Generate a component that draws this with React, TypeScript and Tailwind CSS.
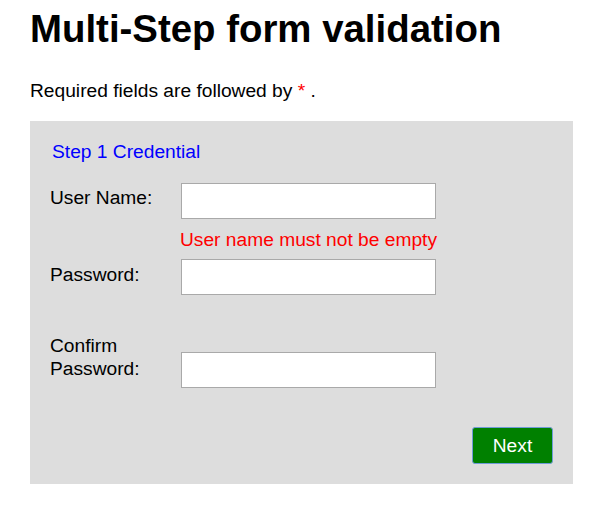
export default function App() {
  return (
    <div className="min-h-screen bg-white text-black font-['Liberation_Sans',Arial,sans-serif] text-[19.2px] leading-[22px] pl-[30px] pr-[28px]">
      <h1 className="pt-[7px] text-[38.4px] leading-[44px] font-bold">Multi-Step form validation</h1>
      <p className="mt-[29px]">
        Required fields are followed by <span className="text-[#ff0000]">*</span> .
      </p>

      <form className="mt-[19px] bg-[#dddddd] pt-[20px] pb-[20px] px-[20px] flex flex-col">
        <div className="ml-[2px] text-[#0000ff]">Step 1 Credential</div>

        <div className="mt-[20px] flex items-start">
          <label className="w-[131px] mt-[4px]">User Name:</label>
          <input type="text" className="w-[255px] h-[36px] bg-white border border-[#a9a9a9] outline-none" />
        </div>
        <div className="mt-[10px] pl-[130px] text-[#ff0000]">User name must not be empty</div>

        <div className="mt-[8px] flex items-start">
          <label className="w-[131px] mt-[5px]">Password:</label>
          <input type="password" className="w-[255px] h-[36px] bg-white border border-[#a9a9a9] outline-none" />
        </div>

        <div className="mt-[38px] flex items-start">
          <label className="w-[131px] mt-[1px] leading-[23px]">Confirm Password:</label>
          <input type="password" className="mt-[19px] w-[255px] h-[36px] bg-white border border-[#a9a9a9] outline-none" />
        </div>

        <div className="mt-[39px] flex justify-end">
          <button
            type="button"
            className="w-[81px] h-[37px] bg-[#008000] text-white border border-[#6f9bd8] rounded-[3px]"
          >
            Next
          </button>
        </div>
      </form>
    </div>
  );
}
